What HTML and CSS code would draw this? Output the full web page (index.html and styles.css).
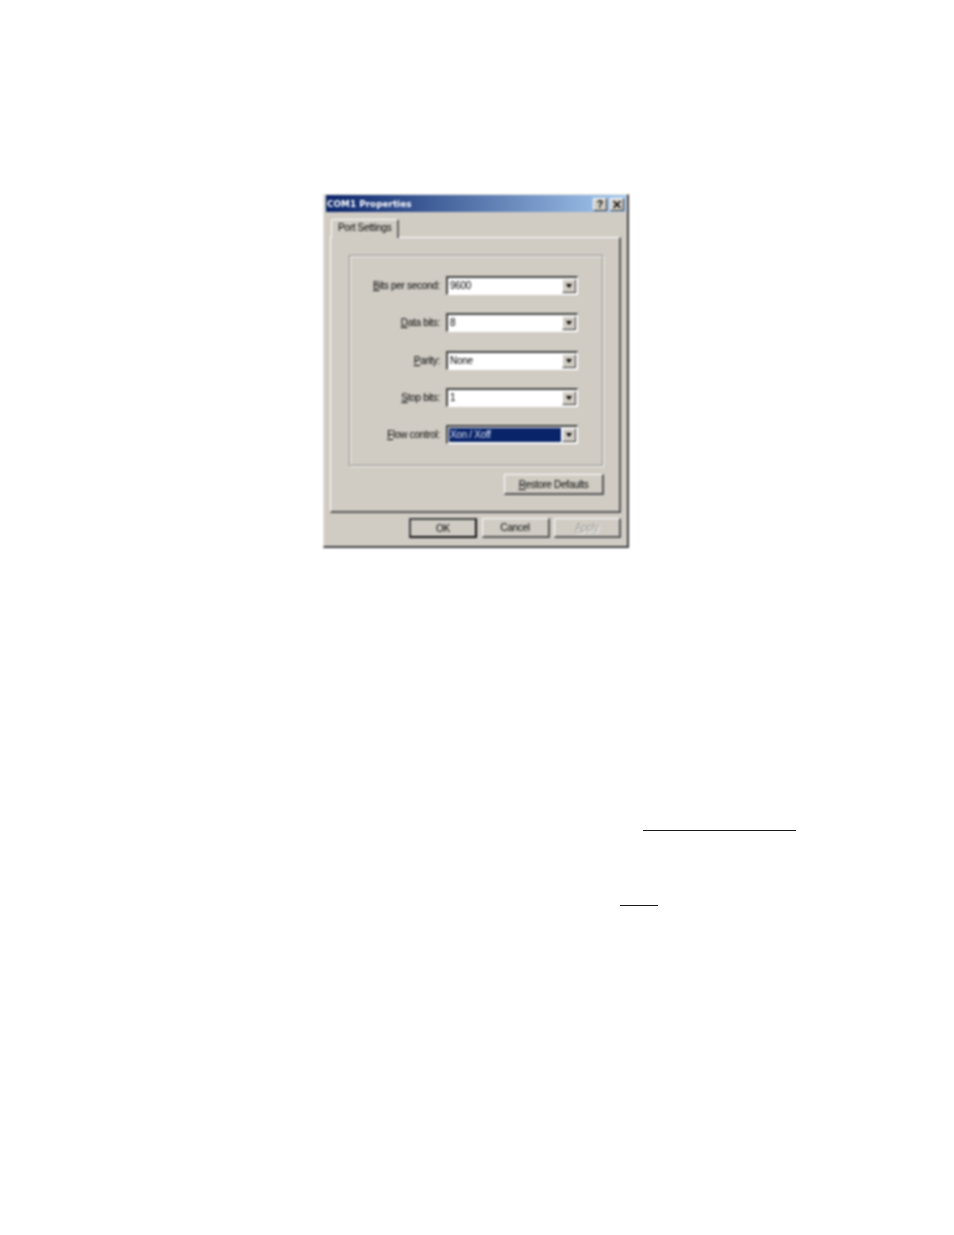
FILE: index.html
```html
<!DOCTYPE html>
<html lang="en">
<head>
  <meta charset="UTF-8" />
  <title>COM1 Properties</title>
  <link rel="stylesheet" href="styles.css">
</head>
<body>
<div class="page">
  <div class="dialog">
    <div class="title-bar">
      <span class="title">COM1 Properties</span>
      <div class="title-btn">?</div>
      <div class="title-btn close">
        <svg width="8" height="7" viewBox="0 0 8 7"><path d="M0.5 0 L7.5 7 M7.5 0 L0.5 7" stroke="#000" stroke-width="1.5" fill="none"/></svg>
      </div>
    </div>
    <div class="tabs"><div class="tab">Port Settings</div></div>
    <div class="panel">
      <div class="group">
        <label><u>B</u>its per second:</label>
        <div class="combo"><span class="value">9600</span><div class="arrow"></div></div>
        <label><u>D</u>ata bits:</label>
        <div class="combo"><span class="value">8</span><div class="arrow"></div></div>
        <label><u>P</u>arity:</label>
        <div class="combo"><span class="value">None</span><div class="arrow"></div></div>
        <label><u>S</u>top bits:</label>
        <div class="combo"><span class="value">1</span><div class="arrow"></div></div>
        <label><u>F</u>low control:</label>
        <div class="combo"><span class="value selected">Xon / Xoff</span><div class="arrow"></div></div>
      </div>
      <div class="panel-actions">
        <button class="btn restore"><u>R</u>estore Defaults</button>
      </div>
    </div>
    <div class="dialog-actions">
      <button class="btn default">OK</button>
      <button class="btn">Cancel</button>
      <button class="btn disabled"><u>A</u>pply</button>
    </div>
  </div>
  <div class="rule rule-long"></div>
  <div class="rule rule-short"></div>
</div>
</body>
</html>
```

FILE: styles.css
```css
* { box-sizing: border-box; margin: 0; padding: 0; }
html, body { height: 100%; background: #fff; overflow: hidden; }
body { font-family: 'Liberation Sans', Arial, sans-serif; font-size: 10px; letter-spacing: -0.3px; color: #000; }
.page { height: 1235px; padding-top: 194px; }

.dialog { width: 306px; height: 354px; margin-left: 323px; background: #d0ccc4; padding: 0 1px 0 2px; border: 1px solid; border-color: #e6e4de #404040 #404040 #e6e4de; border-width: 1px 2px 2px 1px; filter: blur(0.8px); }
.title-bar { display: flex; align-items: center; height: 17px; padding: 1px 2px 0 1px; background: linear-gradient(90deg, #0a246a, #a6caf0); }
.title { flex: 1; color: #fff; font-family: 'DejaVu Sans', sans-serif; font-weight: bold; font-size: 8.9px; letter-spacing: 0; }
.title-btn { display: flex; align-items: center; justify-content: center; width: 14px; height: 13px; background: #d0ccc4; border: 1px solid; border-color: #fff #303030 #303030 #fff; font-weight: bold; font-size: 10px; color: #000; }
.title-btn.close { margin-left: 3px; }

.tabs { display: flex; height: 25px; padding: 7px 0 0 5px; position: relative; z-index: 1; }
.tab { width: 68px; height: 19px; padding-top: 2px; padding-left: 6px; background: #d0ccc4; border: 1px solid #fff; border-bottom: none; border-right: 2px solid #666; border-radius: 2px 2px 0 0; white-space: nowrap; }

.panel { width: 291px; height: 276px; margin-left: 4px; padding: 17px 18px 0 18px; border: 1px solid; border-color: #fff #555 #555 #fff; border-width: 1px 2px 2px 1px; }
.group { display: grid; grid-template-columns: 90px 132px; column-gap: 6px; row-gap: 18.3px; align-items: center; align-content: start; width: 254px; height: 211px; padding-top: 20px; border: 1px solid #8c8982; box-shadow: 1px 1px 0 #fff, inset 1px 1px 0 #fff; }
.group label { text-align: right; white-space: nowrap; }
.combo { display: flex; align-items: center; height: 19px; background: #fff; border: 1px solid; border-color: #444 #fff #fff #444; border-width: 2px 1px 1px 2px; padding: 1px; color: #000; }
.value { flex: 1; height: 100%; line-height: 14px; padding-left: 1px; }
.value.selected { background: #0a246a; color: #d8e0f0; }
.arrow { position: relative; width: 14px; height: 14px; margin-left: 1px; background: #d0ccc4; border: 1px solid; border-color: #fff #303030 #303030 #fff; }
.arrow::after { content: ""; position: absolute; left: 3px; top: 4px; border: 3px solid transparent; border-top: 4px solid #000; border-bottom: none; }

.panel-actions { display: flex; justify-content: flex-end; margin-top: 8px; margin-right: -3px; }
.btn { height: 21px; background: #d0ccc4; border: 1px solid; border-color: #fff #555 #555 #fff; border-width: 1px 2px 2px 1px; font: inherit; letter-spacing: inherit; color: #000; }
.restore { width: 100px; }

.dialog-actions { display: flex; justify-content: flex-end; gap: 4.5px; padding: 5px 5px 0 0; }
.dialog-actions .btn { width: 68px; height: 20px; }
.dialog-actions .default { border: 2px solid #111; border-color: #444 #111 #111 #444; }
.dialog-actions .disabled { width: 67px; color: #98958e; text-shadow: 1px 1px 0 #fff; }

.rule { height: 1px; background: #1a1a1a; }
.rule-long { width: 153px; margin: 282px 0 0 643px; }
.rule-short { width: 38px; margin: 74px 0 0 620px; }
```
